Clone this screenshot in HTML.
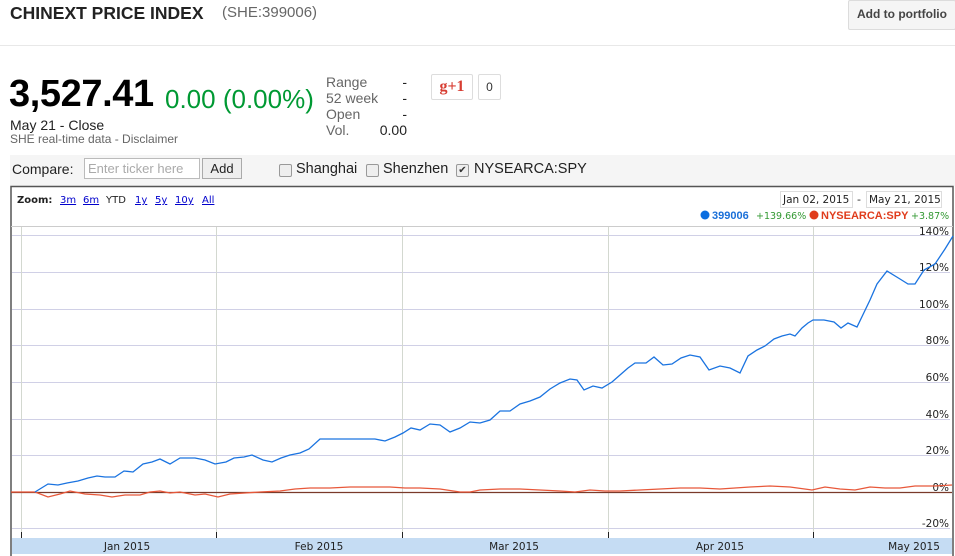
<!DOCTYPE html>
<html><head><meta charset="utf-8"><style>
body{margin:0;width:955px;height:556px;background:#fff;font-family:"Liberation Sans",Arial,sans-serif;position:relative;overflow:hidden}
.a{position:absolute;white-space:nowrap}
</style></head><body>
<div class="a" style="left:10px;top:3px;font-size:17.5px;font-weight:bold;color:#222">CHINEXT PRICE INDEX</div>
<div class="a" style="left:222px;top:4px;font-size:15px;color:#666">(SHE:399006)</div>
<div class="a" style="left:848px;top:0px;width:106px;height:28px;background:#f5f5f5;border:1px solid #dcdcdc;border-radius:2px;font-size:12px;font-weight:bold;color:#444;text-align:center;line-height:27px">Add to portfolio</div>
<div class="a" style="left:0;top:45px;width:955px;height:1px;background:#e8e8e8"></div>
<div class="a" style="left:9px;top:73px;font-size:38px;font-weight:bold;color:#000;letter-spacing:-0.4px">3,527.41</div>
<div class="a" style="left:165px;top:84px;font-size:26px;color:#093">0.00 (0.00%)</div>
<div class="a" style="left:10px;top:117px;font-size:14px;color:#222">May 21 - Close</div>
<div class="a" style="left:10px;top:132px;font-size:12px;color:#666">SHE real-time data - Disclaimer</div>
<div class="a" style="left:326px;top:74px;font-size:14px;color:#666;line-height:16px">Range<br>52 week<br>Open<br>Vol.</div>
<div class="a" style="left:380px;top:74px;width:27px;font-size:14px;color:#222;line-height:16px;text-align:right">-<br>-<br>-<br><span style="margin-left:-30px">0.00</span></div>
<div class="a" style="left:431px;top:74px;width:40px;height:24px;border:1px solid #ddd;border-radius:2px;color:#d73d32;font-weight:bold;font-size:16px;text-align:center;line-height:23px;font-family:'Liberation Serif',serif">g+1</div>
<div class="a" style="left:478px;top:74px;width:21px;height:24px;border:1px solid #ddd;border-radius:2px;font-size:12px;color:#333;text-align:center;line-height:24px">0</div>
<div class="a" style="left:10px;top:155px;width:945px;height:31px;background:#f5f5f5"></div>
<div class="a" style="left:12px;top:161px;font-size:14px;color:#222">Compare:</div>
<div class="a" style="left:84px;top:158px;width:111px;height:19px;border:1px solid #bbb;background:#fff;font-size:13px;color:#aaa;line-height:19px;padding-left:3px">Enter ticker here</div>
<div class="a" style="left:202px;top:158px;width:38px;height:19px;border:1px solid #aaa;background:#eee;font-size:13px;color:#222;text-align:center;line-height:19px">Add</div>
<div class="a" style="left:279px;top:164px;width:11px;height:11px;border:1px solid #999;border-radius:2px;background:#eee"></div>
<div class="a" style="left:296px;top:161px;font-size:14.5px;color:#222">Shanghai</div>
<div class="a" style="left:366px;top:164px;width:11px;height:11px;border:1px solid #999;border-radius:2px;background:#eee"></div>
<div class="a" style="left:383px;top:161px;font-size:14.5px;color:#222">Shenzhen</div>
<div class="a" style="left:456px;top:164px;width:11px;height:11px;border:1px solid #999;border-radius:2px;background:#eee;font-size:10px;line-height:11px;text-align:center;color:#333">✔</div>
<div class="a" style="left:474px;top:161px;font-size:14.5px;color:#222">NYSEARCA:SPY</div>

<svg class="a" style="left:0;top:0" width="955" height="556" font-family="DejaVu Sans, Verdana, sans-serif">
<rect x="11" y="186.5" width="942" height="380" fill="none" stroke="#555" stroke-width="1.5"/>
<text x="17" y="203" font-size="10" font-weight="bold" fill="#222">Zoom:</text>
<g font-size="10" fill="#00c" text-decoration="underline">
<text x="60" y="203">3m</text><text x="83" y="203">6m</text><text x="135" y="203">1y</text><text x="155" y="203">5y</text><text x="175" y="203">10y</text><text x="202" y="203">All</text></g>
<text x="106" y="203" font-size="10" fill="#222">YTD</text>
<rect x="780.5" y="191.5" width="72" height="16" fill="#fff" stroke="#ddd"/>
<rect x="866.5" y="191.5" width="75" height="16" fill="#fff" stroke="#ddd"/>
<text x="783" y="203" font-size="10.5" fill="#222">Jan 02, 2015</text>
<text x="857" y="203" font-size="11" fill="#222">-</text>
<text x="869" y="203" font-size="10.5" fill="#222">May 21, 2015</text>
<circle cx="705" cy="215" r="4.5" fill="#0b6ee0"/>
<text x="712" y="219" font-size="11" font-weight="bold" fill="#1a6fd8" font-family="Liberation Sans, Arial, sans-serif">399006</text>
<text x="756" y="219" font-size="9.5" fill="#393">+139.66%</text>
<circle cx="814" cy="215" r="4.5" fill="#e03c1c"/>
<text x="821" y="219" font-size="11" font-weight="bold" fill="#e03c1c" font-family="Liberation Sans, Arial, sans-serif">NYSEARCA:SPY</text>
<text x="911" y="219" font-size="9.5" fill="#393">+3.87%</text>
<line x1="11" y1="226.5" x2="953" y2="226.5" stroke="#ccc"/>
<g stroke="#d0d0e6" stroke-width="1">
<line x1="12" y1="235.5" x2="950" y2="235.5"/><line x1="12" y1="272.5" x2="950" y2="272.5"/><line x1="12" y1="309.5" x2="950" y2="309.5"/><line x1="12" y1="345.5" x2="950" y2="345.5"/><line x1="12" y1="382.5" x2="950" y2="382.5"/><line x1="12" y1="419.5" x2="950" y2="419.5"/><line x1="12" y1="455.5" x2="950" y2="455.5"/><line x1="12" y1="528.5" x2="950" y2="528.5"/></g>
<g stroke="#d3d8d0"><line x1="21.5" y1="227" x2="21.5" y2="538"/><line x1="216.5" y1="227" x2="216.5" y2="538"/><line x1="402.5" y1="227" x2="402.5" y2="538"/><line x1="608.5" y1="227" x2="608.5" y2="538"/><line x1="813.5" y1="227" x2="813.5" y2="538"/></g>
<g font-size="10.5" fill="#222" text-anchor="end"><text x="949" y="235">140%</text><text x="949" y="271">120%</text><text x="949" y="308">100%</text><text x="949" y="344">80%</text><text x="949" y="381">60%</text><text x="949" y="418">40%</text><text x="949" y="454">20%</text><text x="949" y="491">0%</text><text x="949" y="527">-20%</text></g>
<line x1="11" y1="492.5" x2="952" y2="492.5" stroke="#7a3a2a" stroke-width="1.3"/>
<polyline fill="none" stroke="#e8583a" stroke-width="1.3" points="11,492 35,492 48,497 60,494 70,491 85,494 100,495 112,497 125,495 140,495 150,492 160,491 170,493 180,492 195,495 205,494 218,497 230,494 245,493 260,492 280,491 295,489 310,488 330,488 350,487 370,487 390,487 405,488 420,488 440,489 460,492 470,492 480,490 500,489 520,489 540,490 560,491 575,492 590,490 605,491 620,491 640,490 660,489 680,488 700,488 720,489 735,488 750,487 770,486 790,487 812,490 825,487 840,489 855,490 870,487 885,488 900,488 915,486 935,486 952,485"/>
<polyline fill="none" stroke="#1a73e0" stroke-width="1.3" points="35,492 48,484 58,485 67,483 78,481 88,478 97,476 105,477 115,477 124,471 133,472 143,464 152,462 160,459 170,464 180,458 195,458 205,460 215,464 226,462 234,458 244,457 252,455 263,460 272,462 281,458 290,455 300,453 309,449 320,439 375,439 385,441 395,437 403,433 411,428 420,430 430,424 440,425 450,432 460,428 470,422 480,423 490,420 500,411 510,411 520,404 530,401 540,397 550,389 560,383 570,379 577,380 584,390 593,386 602,388 612,382 620,375 628,368 635,363 646,363 654,357 663,365 672,364 681,358 690,355 700,357 709,370 720,366 730,368 740,373 748,356 757,350 765,346 774,339 782,336 790,334 795,336 802,328 808,323 813,320 824,320 834,322 841,328 848,323 857,327 870,300 877,284 887,271 900,279 908,284 915,284 924,270 935,264 945,249 953,236"/>
<rect x="12" y="538" width="940" height="16" fill="#c5dcf3"/>
<g stroke="#222"><line x1="21.5" y1="532" x2="21.5" y2="538"/><line x1="216.5" y1="532" x2="216.5" y2="538"/><line x1="402.5" y1="532" x2="402.5" y2="538"/><line x1="608.5" y1="532" x2="608.5" y2="538"/><line x1="813.5" y1="532" x2="813.5" y2="538"/></g>
<g font-size="10.5" fill="#222" text-anchor="middle"><text x="127" y="550">Jan 2015</text><text x="319" y="550">Feb 2015</text><text x="514" y="550">Mar 2015</text><text x="720" y="550">Apr 2015</text><text x="914" y="550">May 2015</text></g>
</svg>
</body></html>
